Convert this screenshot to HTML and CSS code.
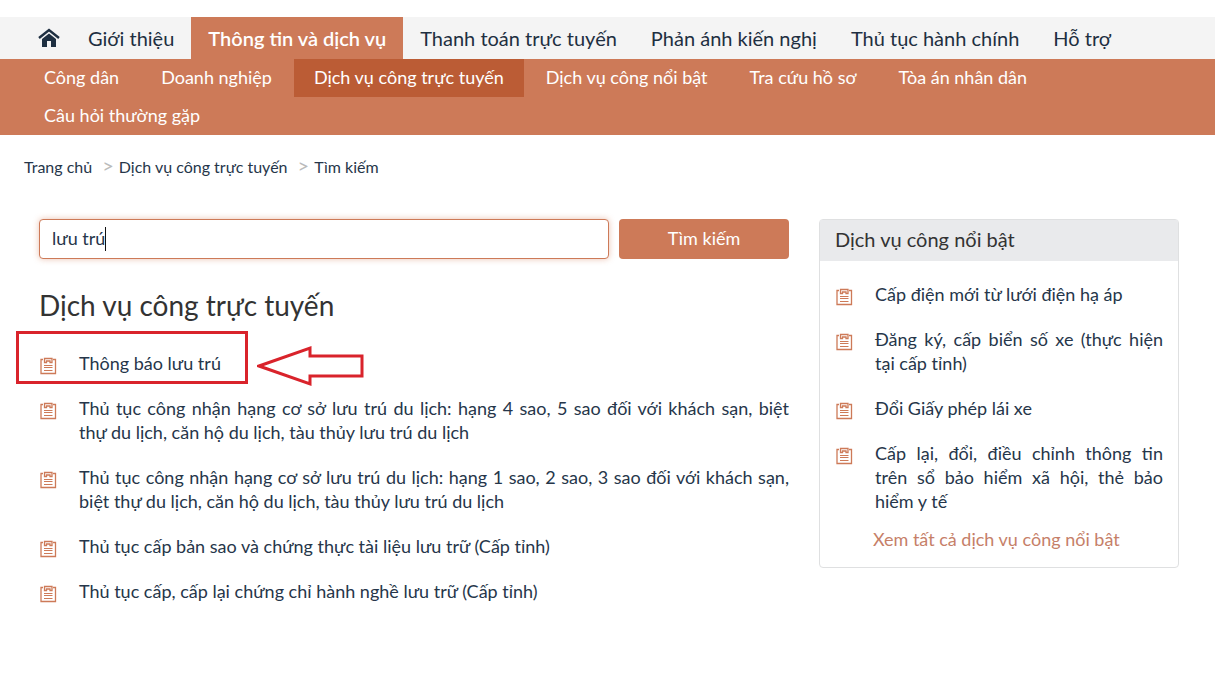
FILE: index.html
```html
<!DOCTYPE html>
<html lang="vi">
<head>
<meta charset="utf-8">
<title>Dịch vụ công trực tuyến - Tìm kiếm</title>
<link rel="stylesheet" href="styles.css">
</head>
<body>
<svg class="sprite" aria-hidden="true">
  <symbol id="clipboard" viewBox="0 0 18 18">
    <path d="M4 2.500H2v14h14.500v-14H14" fill="none" stroke="currentColor" stroke-width="1.300"/>
    <path d="M5.500 1.500h7.500v4h-2v-1.500H7.500v1.500h-2z" fill="none" stroke="currentColor" stroke-width="1.300"/>
    <path d="M5 8.500h8.500M5 10.500h8.500M5 13.500h8.500" fill="none" stroke="currentColor" stroke-width="1"/>
  </symbol>
</svg>
<header>
  <nav class="main-nav" aria-label="Menu chính">
    <a class="home" href="#" aria-label="Trang chủ">
      <svg viewBox="0 0 22 20" width="22" height="20" aria-hidden="true">
        <path d="M1 10 11 2l10 8" fill="none" stroke="currentColor" stroke-width="2.4"/>
        <path d="M11 5.500 18 11v8h-5v-6H9v6H4v-8z" fill="currentColor"/>
      </svg>
    </a>
    <a href="#">Giới thiệu</a>
    <a class="active" href="#">Thông tin và dịch vụ</a>
    <a href="#">Thanh toán trực tuyến</a>
    <a href="#">Phản ánh kiến nghị</a>
    <a href="#">Thủ tục hành chính</a>
    <a href="#">Hỗ trợ</a>
  </nav>
  <nav class="sub-nav" aria-label="Menu phụ">
    <a href="#">Công dân</a>
    <a href="#">Doanh nghiệp</a>
    <a class="active" href="#">Dịch vụ công trực tuyến</a>
    <a href="#">Dịch vụ công nổi bật</a>
    <a href="#">Tra cứu hồ sơ</a>
    <a href="#">Tòa án nhân dân</a>
    <a href="#">Câu hỏi thường gặp</a>
  </nav>
</header>
<nav class="breadcrumb" aria-label="Đường dẫn">
  <a href="#">Trang chủ</a><span class="sep">&gt;</span><a href="#">Dịch vụ công trực tuyến</a><span class="sep">&gt;</span><span>Tìm kiếm</span>
</nav>
<div class="content">
  <main>
    <form class="search">
      <div class="field">
        <input type="text" value="lưu trú" aria-label="Từ khóa">
        <span class="caret"></span>
      </div>
      <button type="button">Tìm kiếm</button>
    </form>
    <h1>Dịch vụ công trực tuyến</h1>
    <ul class="services">
      <li class="marked">
        <svg class="icon" aria-hidden="true"><use href="#clipboard"/></svg><a href="#">Thông báo lưu trú</a>
        <span class="mark-box"></span>
        <svg class="mark-arrow" viewBox="0 0 107 42" aria-hidden="true"><path d="M2 21 53 3v8h52v20H53v8z" fill="none" stroke="currentColor" stroke-width="3"/></svg>
      </li>
      <li><svg class="icon" aria-hidden="true"><use href="#clipboard"/></svg><a href="#">Thủ tục công nhận hạng cơ sở lưu trú du lịch: hạng 4 sao, 5 sao đối với khách sạn, biệt thự&nbsp;du lịch, căn hộ du lịch, tàu thủy lưu trú du lịch</a></li>
      <li><svg class="icon" aria-hidden="true"><use href="#clipboard"/></svg><a href="#">Thủ tục công nhận hạng cơ sở lưu trú du lịch: hạng 1 sao, 2 sao, 3 sao đối với khách sạn, biệt thự du lịch, căn hộ du lịch, tàu thủy lưu trú du lịch</a></li>
      <li><svg class="icon" aria-hidden="true"><use href="#clipboard"/></svg><a href="#">Thủ tục cấp bản sao và chứng thực tài liệu lưu trữ (Cấp tỉnh)</a></li>
      <li><svg class="icon" aria-hidden="true"><use href="#clipboard"/></svg><a href="#">Thủ tục cấp, cấp lại chứng chỉ hành nghề lưu trữ (Cấp tỉnh)</a></li>
    </ul>
  </main>
  <aside class="card">
    <h2>Dịch vụ công nổi bật</h2>
    <ul class="services">
      <li><svg class="icon" aria-hidden="true"><use href="#clipboard"/></svg><a href="#">Cấp điện mới từ lưới điện hạ áp</a></li>
      <li><svg class="icon" aria-hidden="true"><use href="#clipboard"/></svg><a href="#">Đăng ký, cấp biển số xe (thực hiện tại cấp tỉnh)</a></li>
      <li><svg class="icon" aria-hidden="true"><use href="#clipboard"/></svg><a href="#">Đổi Giấy phép lái xe</a></li>
      <li><svg class="icon" aria-hidden="true"><use href="#clipboard"/></svg><a href="#">Cấp lại, đổi, điều chỉnh thông tin trên sổ bảo hiểm xã hội, thẻ bảo hiểm y tế</a></li>
    </ul>
    <a class="all" href="#">Xem tất cả dịch vụ công nổi bật</a>
  </aside>
</div>
</body>
</html>
```
FILE: styles.css
```css
* { box-sizing: border-box; }

body {
  margin: 0;
  background: #fff;
  color: #26364a;
  font: 400 18px/24px Lato, "Open Sans", sans-serif;
}

a { color: inherit; text-decoration: none; }
ul { margin: 0; padding: 0; list-style: none; }
.sprite { position: absolute; width: 0; height: 0; }

.main-nav {
  display: flex;
  margin-top: 17px;
  padding-left: 22px;
  background: #f4f4f4;
  color: #1e2f41;
  font-size: 20px;
  line-height: 42px;
}
.main-nav a { padding: 0 17px; white-space: nowrap; }
.main-nav .home { display: flex; align-items: center; padding: 0 11px 0 16px; }
.main-nav .active { background: #cd7a58; color: #fff; font-weight: 600; }

.sub-nav {
  display: flex;
  flex-wrap: wrap;
  column-gap: 2px;
  padding: 0 24px;
  background: #cd7a58;
  color: #fff;
  line-height: 36px;
}
.sub-nav a { padding: 0 20px 2px; }
.sub-nav .active { background: #bb5c35; }

.breadcrumb { padding: 20px 24px 0; font-size: 16px; }
.sep { margin: 0 5px 0 10px; color: #bbb; font-size: 20px; line-height: 20px; }

.content {
  display: grid;
  grid-template-columns: 1fr 360px;
  align-items: start;
  gap: 30px;
  padding: 40px 36px 0 39px;
}

.search { display: flex; gap: 10px; }
.field { position: relative; flex: 1; }
.field input {
  display: block;
  width: 100%;
  height: 40px;
  padding: 0 12px 2px;
  border: 1px solid #cd7a58;
  border-radius: 4px;
  outline: none;
  box-shadow: 0 0 6px rgba(205, 100, 60, 0.4);
  color: inherit;
  font: inherit;
}
.caret {
  position: absolute;
  top: 8px;
  left: 66px;
  width: 1px;
  height: 24px;
  background: #111;
}
.search button {
  width: 170px;
  height: 40px;
  padding: 0 0 3px;
  border: 0;
  border-radius: 4px;
  background: #cd7a58;
  color: #fff;
  font: inherit;
}

h1 {
  margin: 29px 0 28px;
  color: #333;
  font-size: 28px;
  font-weight: 400;
  line-height: 35px;
}

.services { display: grid; gap: 21px; }
.services li { display: flex; text-align: justify; }
.icon {
  flex: none;
  width: 18px;
  height: 18px;
  margin: 6px 22px 0 0;
  color: #cd7a58;
}

.marked { position: relative; }
.mark-box {
  position: absolute;
  top: -20px;
  left: -23px;
  width: 232px;
  height: 53px;
  border: 3px solid #d9232b;
}
.mark-arrow {
  position: absolute;
  top: -6px;
  left: 218px;
  width: 107px;
  height: 42px;
  color: #d9232b;
}

.card {
  border: 1px solid #dfe0e1;
  border-radius: 4px;
  padding-bottom: 16px;
}
.card h2 {
  margin: 0;
  padding: 0 15px 2px;
  background: #e9eaec;
  color: #333;
  font-size: 20px;
  font-weight: 400;
  line-height: 39px;
}
.card .services { padding: 21px 15px 14px; }
.all { display: block; padding-left: 53px; color: #c67f69; }
```
